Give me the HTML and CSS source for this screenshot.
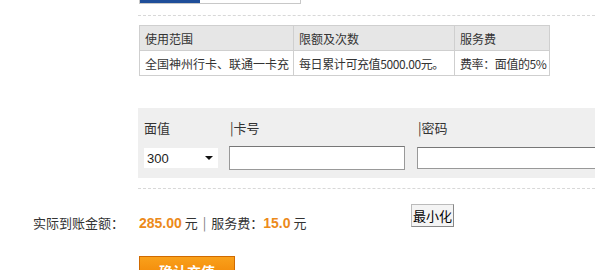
FILE: index.html
```html
<!DOCTYPE html>
<html lang="zh-CN">
  <head>
    <meta charset="UTF-8" />
    <title>一卡充充值</title>
    <link rel="stylesheet" href="styles.css">
  </head>
  <body>
    <div class="page">
      <div class="content">
        <div class="tabs">
          <div class="tab tab-on"></div>
          <div class="tab"></div>
        </div>
        <div class="dash first"></div>
        <table class="info">
          <tr>
            <th class="c1">使用范围</th>
            <th class="c2">限额及次数</th>
            <th class="c3">服务费</th>
          </tr>
          <tr>
            <td>全国神州行卡、联通一卡充</td>
            <td class="narrow">每日累计可充值5000.00元。</td>
            <td class="narrow">费率：面值的5%</td>
          </tr>
        </table>
        <div class="cardBox">
          <div class="field f1">
            <div class="label">面值</div>
            <div class="selWrap">
              <select class="sel">
                <option>300</option>
              </select>
            </div>
          </div>
          <div class="field f2">
            <div class="label">|卡号</div>
            <input class="txt" type="text" />
          </div>
          <div class="field f3">
            <div class="label">|密码</div>
            <input class="txt" type="password" />
          </div>
        </div>
        <div class="dash second"></div>
      </div>
      <div class="result">
        <div class="resLabel">实际到账金额：</div>
        <div class="resValue">
          <span class="money">285.00</span> 元<span class="sep">|</span>服务费：<span class="money">15.0</span> 元
        </div>
        <button class="minBtn" type="button">最小化</button>
      </div>
      <div class="submit">
        <button class="okBtn" type="button">确认充值</button>
      </div>
    </div>
  </body>
</html>
```

FILE: styles.css
```css
body {
  margin: 0;
  font-family: "Noto Sans CJK SC", "Liberation Sans", sans-serif;
  font-size: 12px;
  color: #333;
  background: #fff;
  overflow: hidden;
}
.page {
  width: 595px;
  height: 270px;
  overflow: hidden;
}
.content {
  padding-left: 138px;
}
.tabs {
  display: flex;
  width: 160px;
  height: 3px;
  margin-left: 1px;
  border: 1px solid #c8c8c8;
  border-top: 0;
}
.tab {
  flex: 1;
}
.tab-on {
  flex: none;
  width: 60px;
  background: #1f4e99;
}
.dash {
  border-top: 1px dashed #d8d8d8;
}
.dash.first {
  margin-top: 11px;
}
.dash.second {
  margin-top: 10px;
}
.info {
  margin-top: 9px;
  margin-left: 1px;
  border-collapse: collapse;
  table-layout: fixed;
  width: 411px;
}
.info th,
.info td {
  border: 1px solid #cfcfcf;
  height: 24px;
  padding: 0 0 0 5px;
  text-align: left;
  font-weight: normal;
  white-space: nowrap;
  overflow: hidden;
}
.info th {
  background: #e6e6e6;
}
.info .c1 {
  width: 148px;
}
.info .c2 {
  width: 155px;
}
.info .c3 {
  width: 89px;
}
.info .narrow {
  letter-spacing: -0.4px;
}
.cardBox {
  display: flex;
  margin-top: 32px;
  height: 70px;
  padding-left: 6px;
  background: #efefef;
}
.field {
  flex: none;
  display: flex;
  flex-direction: column;
}
.label {
  margin-top: 10px;
  height: 20px;
  line-height: 20px;
  font-size: 13px;
}
.f1 {
  width: 85px;
}
.f2 {
  width: 188px;
}
.f3 {
  width: 220px;
}
.f2 .label,
.f3 .label {
  margin-left: 1px;
}
.selWrap {
  position: relative;
  margin-top: 10px;
  width: 74px;
  height: 20px;
  background: #fff;
}
.selWrap::after {
  content: "";
  position: absolute;
  right: 5px;
  top: 8px;
  border-left: 4px solid transparent;
  border-right: 4px solid transparent;
  border-top: 4px solid #111;
}
.sel {
  appearance: none;
  -webkit-appearance: none;
  width: 74px;
  height: 20px;
  border: 0;
  background: transparent;
  font-family: "Liberation Sans", sans-serif;
  font-size: 13px;
  color: #222;
  padding: 0 3px;
}
.txt {
  box-sizing: border-box;
  margin-top: 8px;
  width: 176px;
  height: 24px;
  border: 1px solid #999;
  border-top-color: #777;
  background: #fff;
}
.f3 .txt {
  width: 220px;
  height: 22px;
  margin-top: 9px;
}
.result {
  display: flex;
  align-items: flex-start;
  margin-top: 15px;
  height: 26px;
}
.resLabel {
  width: 139px;
  padding-left: 33px;
  margin-top: 9px;
  box-sizing: border-box;
  font-size: 13px;
}
.resValue {
  width: 272px;
  margin-top: 9px;
  font-size: 13px;
}
.money {
  color: #ec8a1a;
  font-weight: bold;
  font-family: "Liberation Sans", sans-serif;
  font-size: 14px;
}
.sep {
  color: #777;
  margin: 0 5px;
}
.minBtn {
  height: 23px;
  padding: 0 1px;
  border: 1px solid #bbb;
  border-right-color: #888;
  border-bottom-color: #888;
  background: #f4f4f4;
  font-family: "Noto Sans CJK SC", sans-serif;
  font-size: 13px;
  color: #000;
}
.submit {
  padding-left: 139px;
  margin-top: 26px;
}
.okBtn {
  width: 96px;
  height: 30px;
  border: 1px solid #d06a00;
  background: linear-gradient(#f9a11b, #ef7d00);
  color: #fff;
  font-family: "Noto Sans CJK SC", sans-serif;
  font-size: 14px;
  font-weight: bold;
}
```
